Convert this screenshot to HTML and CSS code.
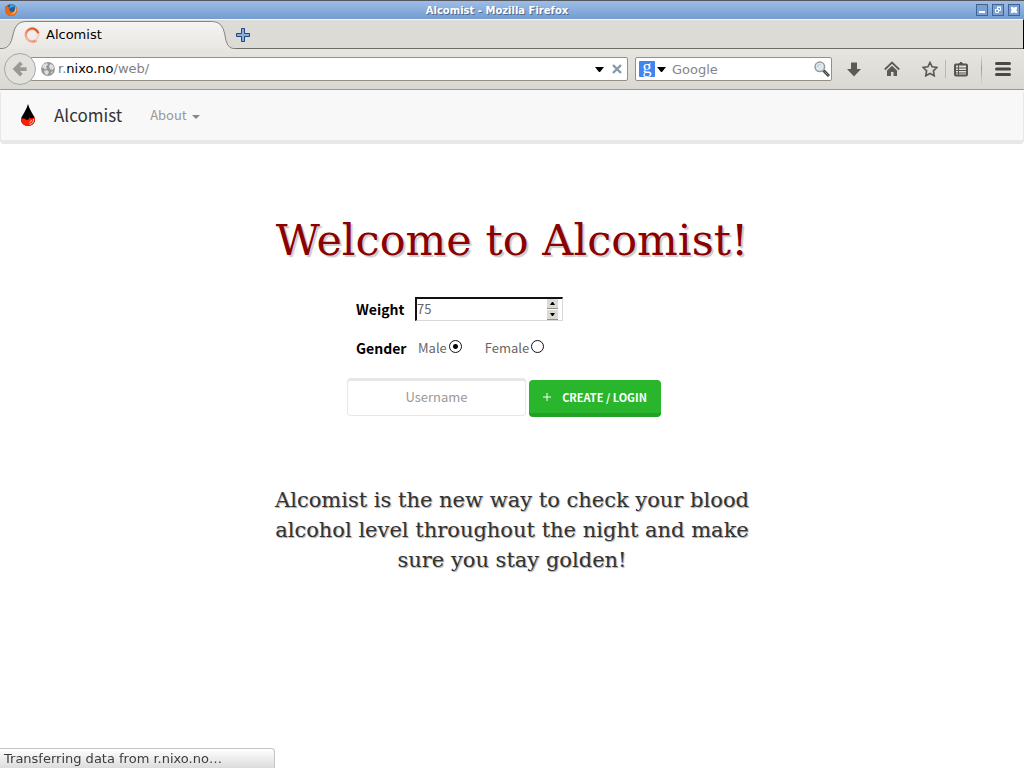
FILE: index.html
```html
<!DOCTYPE html>
<html lang="en">
<head>
<meta charset="utf-8">
<meta name="viewport" content="width=device-width, initial-scale=1">
<title>Alcomist</title>
<link rel="stylesheet" href="styles.css">
</head>
<body>
<header class="titlebar">
  <svg class="firefox" viewBox="0 0 14 14" aria-hidden="true">
    <circle cx="7" cy="7" r="6" fill="#c94a1c"/>
    <circle cx="7.500" cy="5.500" r="4.300" fill="#1f5f9f"/>
    <path d="M6 1.500q3-1 5 2l-2 .5-3 1z" fill="#35a3d8"/>
    <path d="M1 3q2 0 3 1l2 .5-1 2q1 3 4 2.500Q12.500 8 11.500 2.500 14 6 12.500 9.500 10 13.500 6 13 1 12 1 7z" fill="#e5681b"/>
    <path d="M11.500 3q2 4-.5 7-2 2-5 1.500 5-.5 5.500-8.500z" fill="#f6c04a"/>
  </svg>
  <span class="window-title">Alcomist - Mozilla Firefox</span>
  <div class="window-buttons">
    <button class="window-button" aria-label="Minimize"><svg viewBox="0 0 12 12"><path d="M3 7h6v2H3z" fill="#fff"/></svg></button>
    <button class="window-button" aria-label="Restore"><svg viewBox="0 0 12 12"><path d="M5.500 5V3.500h3v3H7M3.500 5.500h3v3h-3z" fill="none" stroke="#fff"/><path d="M5 3h4M3 5.500h4" stroke="#fff"/></svg></button>
    <button class="window-button" aria-label="Close"><svg viewBox="0 0 12 12"><path d="M3 3h2l1 1 1-1h2v2L8 6l1 1v2H7L6 8 5 9H3V7l1-1-1-1z" fill="#fff"/></svg></button>
  </div>
</header>

<div class="tabstrip">
  <div class="tab">
    <svg class="tab-shape" viewBox="0 0 242 29" preserveAspectRatio="none" aria-hidden="true">
      <defs><linearGradient id="tabfill" x2="0" y2="1"><stop offset="0" stop-color="#f5f4f3"/><stop offset="1" stop-color="#e8e7e3"/></linearGradient></defs>
      <path d="M0 29V28H3Q11 28 14 14 17 1.500 26 1.500H218Q228 1.500 230 14 232 28 239 28H242V29z" fill="url(#tabfill)"/>
      <path d="M0 28.500H3Q11 28 13.500 14 16 1.500 26 1.500H218Q228 1.500 230.500 14 232 28 239 28.500H242" fill="none" stroke="#85857c"/>
    </svg>
    <svg class="throbber" viewBox="0 0 18 18" aria-hidden="true">
      <defs><linearGradient id="spin" x1="1" x2="0" y2="1"><stop offset="0" stop-color="#ef4a16"/><stop offset=".5" stop-color="#ee7550"/><stop offset="1" stop-color="#f6cdbd"/></linearGradient></defs>
      <path d="M15.500 7.500A6.500 6.500 0 1 0 13.500 14" fill="none" stroke="url(#spin)" stroke-width="2.500"/>
      <path d="M15.500 7.500Q15.500 12 12 14.500" fill="none" stroke="#f3cdbf" stroke-width="2"/>
    </svg>
    <span class="tab-label">Alcomist</span>
  </div>
  <button class="new-tab" aria-label="New tab"><svg viewBox="0 0 14 14"><path d="M5.500.5h3v5h5v3h-5v5h-3v-5h-5v-3h5z" fill="#86aee0" stroke="#20437d"/></svg></button>
</div>

<div class="toolbar">
  <button class="back" aria-label="Back"><svg viewBox="0 0 32 32"><path d="M23 16H11.500M17.500 9.500L11 16l6.500 6.500" fill="none" stroke="#9a9995" stroke-width="4"/></svg></button>
  <div class="urlbar">
    <svg class="globe" viewBox="0 0 14 14" aria-hidden="true"><circle cx="7" cy="7" r="6.900" fill="#969696"/><path d="M2 2.500L6 1l1 1.500-2 2 1 2-2 1L2 5.500 1 6zM3 9l3-1 2 2-1.500 3L4 12zM9 2l3 1 1 3-1.500 2L9 7 8 4.500zM10 10l2-1-1.500 3z" fill="#dedede"/></svg>
    <div class="url-field">
      <input class="url-input" type="text" aria-label="Address">
      <span class="url-text">r.<span class="url-domain">nixo.no</span>/web/</span>
    </div>
    <button class="url-drop" aria-label="Show history"><svg viewBox="0 0 9 5"><path d="M0 0h9L5 5H4z"/></svg></button>
    <button class="url-stop" aria-label="Stop"><svg viewBox="0 0 10 10"><path d="M1 1l8 8M9 1L1 9" stroke="#8998ab" stroke-width="2.400"/></svg></button>
  </div>
  <div class="searchbar">
    <span class="engine">g</span>
    <button class="url-drop" aria-label="Choose search engine"><svg viewBox="0 0 9 5"><path d="M0 0h9L5 5H4z"/></svg></button>
    <input class="search-input" type="text" placeholder="Google" aria-label="Search">
    <button class="search-go" aria-label="Search"><svg viewBox="0 0 16 16"><path d="M9.500 9.500l5.500 5.500" stroke="#3f3f3f" stroke-width="3"/><path d="M10.500 10.500l4 4" stroke="#999" stroke-width="1"/><circle cx="5.800" cy="5.800" r="4.800" fill="#dce9f3" stroke="#9a9a96" stroke-width="1.500"/><path d="M3.500 6q0-2.500 3-2.500" fill="none" stroke="#a8c4e2"/></svg></button>
  </div>
  <button class="tool downloads" aria-label="Downloads"><svg viewBox="0 0 16 16"><path d="M5 1.500h6V8h4l-7 7.500L1 8h4z" fill="#5b5b58"/></svg></button>
  <button class="tool home" aria-label="Home"><svg viewBox="0 0 16 16"><path d="M.8 8.500L8 1.500l7.200 7" fill="none" stroke="#5b5b58" stroke-width="1.800"/><path d="M8 4.800L3 9.500V15h4v-4h2.500v4H13V9.500z" fill="#5b5b58"/></svg></button>
  <button class="tool star" aria-label="Bookmark this page"><svg viewBox="0 0 16 16"><path d="M8 1.500l2.100 4.300 4.800.7-3.500 3.400.8 4.800L8 12.400l-4.200 2.300.8-4.800L1.100 6.500l4.800-.7z" fill="none" stroke="#5b5b58" stroke-width="1.700"/></svg></button>
  <span class="short-divider"></span>
  <button class="tool bookmarks" aria-label="Bookmarks"><svg viewBox="0 0 16 16"><rect x="2" y="3.500" width="12" height="11" rx="1" fill="none" stroke="#555552" stroke-width="2"/><path d="M5.500 3.500L8 1l2.500 2.500zM3 7h10M3 9.500h10M3 12h10" stroke="#555552" fill="#555552"/><path d="M5.500 4v10" stroke="#555552"/></svg></button>
  <span class="long-divider"></span>
  <button class="tool menu" aria-label="Open menu"><svg viewBox="0 0 16 16"><path d="M1.500 2.500h13M1.500 8h13M1.500 13.500h13" stroke="#484846" stroke-width="3" stroke-linecap="round"/></svg></button>
</div>

<nav class="navbar">
  <a class="brand" href="#">
    <svg class="drop" viewBox="0 0 14 22" aria-hidden="true"><path d="M7 0Q8 4 11 9q3 4 3 7a7 6 0 0 1-14 0q0-3 3-7 3-5 4-9z" fill="#000"/><path d="M0 14.500h3.500l2 1.500 2-.5 1-2 1.500 1 4-1V15.500a7 6.500 0 0 1-14 0z" fill="#ff1e00"/><path d="M12.500 15q.5 4-4 5.500M10.500 16q0 1.500-2 2.500" fill="none" stroke="#fff" stroke-width=".8"/></svg>
    <span>Alcomist</span>
  </a>
  <a class="nav-link" href="#">About<span class="caret"></span></a>
</nav>

<main class="page">
  <h1 class="welcome">Welcome to Alcomist!</h1>
  <form class="signup">
    <div class="field-row">
      <label class="field-name" for="weight">Weight</label>
      <div class="weight-box">
        <input class="weight" id="weight" type="number" placeholder="75">
        <div class="spinner">
          <button type="button" class="step" aria-label="Increase"><svg viewBox="0 0 5 3"><path d="M0 3L2 0h1l2 3z"/></svg></button>
          <button type="button" class="step" aria-label="Decrease"><svg viewBox="0 0 5 3"><path d="M0 0l2 3h1l2-3z"/></svg></button>
        </div>
      </div>
    </div>
    <div class="field-row" role="radiogroup" aria-label="Gender">
      <span class="field-name">Gender</span>
      <label class="choice">Male<input class="radio" type="radio" name="gender" checked></label>
      <label class="choice">Female<input class="radio" type="radio" name="gender"></label>
    </div>
    <div class="login-row">
      <input class="username" type="text" placeholder="Username" aria-label="Username">
      <button type="button" class="create"><svg class="plus" viewBox="0 0 8 8" aria-hidden="true"><path d="M4 0v8M0 4h8" stroke="#fff"/></svg>CREATE / LOGIN</button>
    </div>
  </form>
  <p class="lead">Alcomist is the new way to check your blood alcohol level throughout the night and make sure you stay golden!</p>
</main>

<div class="status" role="status">Transferring data from r.nixo.no…</div>
</body>
</html>
```

FILE: styles.css
```css
* { box-sizing: border-box; }

body {
  margin: 0;
  min-height: 100vh;
  background: #fff;
  color: #222;
  font-family: "DejaVu Sans", sans-serif;
  font-size: 13px;
}

button, input { font: inherit; margin: 0; }
button { padding: 0; border: 0; background: none; }
svg { display: block; }

/* Window title bar */
.titlebar {
  display: grid;
  grid-template-columns: 14px 1fr 44px;
  align-items: center;
  height: 19px;
  padding: 0 4px;
  border-top: 1px solid #55585d;
  background: linear-gradient(#9dbde8, #749ccf);
}
.firefox { width: 14px; height: 14px; }
.window-title {
  text-align: center;
  color: #fff;
  font-size: 10px;
  font-weight: bold;
  text-shadow: 1px 1px 0 #50698c;
}
.window-buttons { display: flex; justify-content: flex-end; gap: 4px; }
.window-button {
  width: 12px;
  height: 12px;
  background: #7ba0d4;
  outline: 1px solid #41638f;
  outline-offset: -1px;
}

/* Tabs */
.tabstrip {
  display: flex;
  height: 30px;
  border-top: 1px solid #f6f6f2;
  border-right: 1px solid #000;
  background: linear-gradient(#dcdbd5, #dcdbd5 28px, #6c6d65 28px);
}
.tab {
  position: relative;
  display: flex;
  align-items: center;
  width: 236px;
  padding-left: 23px;
  gap: 5px;
}
.tab-shape { position: absolute; inset: 0; width: 100%; height: 29px; }
.throbber { position: relative; width: 18px; height: 18px; }
.tab-label { position: relative; color: #000; }
.new-tab svg { width: 14px; height: 14px; }

/* Navigation toolbar */
.toolbar {
  display: flex;
  align-items: center;
  height: 41px;
  padding: 0 12px 0 4px;
  border-bottom: 1px solid #9d998f;
  background: linear-gradient(#e6e5e0, #d9d8d2);
}
.back {
  z-index: 1;
  flex: none;
  width: 32px;
  height: 32px;
  border: 1px solid #a3a8ad;
  border-radius: 50%;
  background: #e2e1dc;
}
.urlbar, .searchbar {
  display: flex;
  align-items: center;
  height: 24px;
  border: 1px solid #968f84;
  border-radius: 2px;
  background: #fff;
}
.urlbar { flex: 1; margin-left: -6px; padding: 0 5px 0 10px; }
.globe { width: 14px; height: 14px; }
.url-field { position: relative; flex: 1; margin-left: 3px; }
.url-input { width: 100%; height: 20px; padding: 0; border: 0; outline: 0; background: none; }
.url-text { position: absolute; left: 0; top: 2px; color: #7f7f7f; pointer-events: none; }
.url-domain { color: #000; }
.url-drop svg { width: 9px; height: 5px; }
.url-stop { margin-left: 8px; }
.url-stop svg { width: 10px; height: 10px; }
.searchbar { width: 197px; margin-left: 7px; padding: 0 1px 0 3px; }
.engine {
  width: 16px;
  height: 16px;
  border-radius: 1px;
  background: #4484f0;
  color: #fff;
  font: 18px/12px "Liberation Serif", serif;
  text-align: center;
}
.engine + .url-drop { margin-left: 2px; }
.search-input {
  flex: 1;
  min-width: 0;
  height: 20px;
  margin-left: 6px;
  padding: 0;
  border: 0;
  background: none;
}
.search-input::placeholder { color: #858585; opacity: 1; }
.search-go svg, .tool svg { width: 16px; height: 16px; }
.downloads { margin-left: 14px; }
.home { margin-left: 22px; }
.star { margin-left: 22px; }
.short-divider { width: 1px; height: 18px; margin: 0 7px; background: #b9b7b2; }
.long-divider { width: 1px; height: 32px; margin: 0 12px; background: linear-gradient(transparent, #9c9a94, transparent); }
.menu svg { width: 18px; }

/* Site navigation bar */
.navbar {
  display: flex;
  align-items: center;
  gap: 28px;
  height: 54px;
  padding: 0 20px;
  border: 1px solid #e7e7e7;
  border-width: 0 1px 4px;
  border-radius: 4px;
  background: #f8f8f8;
  font-family: "Noto Sans CJK SC", sans-serif;
}
.brand, .nav-link { display: flex; align-items: center; text-decoration: none; line-height: 24px; }
.brand { gap: 19px; color: #333; font-size: 17px; }
.drop { width: 14px; height: 22px; }
.nav-link { gap: 5px; color: #999; font-size: 13px; }
.caret { margin-top: 3px; border: 4px solid transparent; border-top-color: #888; border-bottom: 0; }

/* Page content */
.page {
  display: flex;
  flex-direction: column;
  align-items: center;
  padding: 69px 16px 40px;
}
.welcome {
  margin: 0;
  color: #8b0000;
  font: 43px/54px "DejaVu Serif", serif;
  text-align: center;
  text-shadow: 2px 2px 1px #ccc;
}
.signup {
  display: flex;
  flex-direction: column;
  margin-top: 30px;
  padding-right: 16px;
  font-family: "Noto Sans CJK SC", sans-serif;
  color: #666;
}
.field-row { display: flex; align-items: center; height: 24px; padding-left: 9px; }
.field-row + .field-row { margin-top: 15px; }
.field-name { width: 59px; color: #000; font-size: 14px; font-weight: bold; line-height: 20px; }
.weight-box {
  display: flex;
  width: 148px;
  height: 24px;
  border: 2px inset #dad8d2;
  border-color: #111 #dad8d2 #dad8d2 #111;
  border-style: solid;
  border-width: 2px 1px 1px 2px;
}
.weight {
  flex: 1;
  min-width: 0;
  padding: 0 0 2px;
  border: 0;
  outline: 0;
  appearance: textfield;
  -moz-appearance: textfield;
}
.weight::placeholder { color: #666; opacity: 1; }
.spinner { display: flex; flex-direction: column; gap: 1px; width: 11px; margin-right: 4px; }
.step {
  display: grid;
  flex: 1;
  place-items: center;
  border-bottom: 1px solid #938f86;
  background: #dcdad5;
}
.step svg { width: 5px; height: 3px; }
.choice { display: flex; align-items: center; gap: 2px; margin-left: 3px; line-height: 20px; }
.choice + .choice { margin-left: 23px; }
.radio {
  appearance: none;
  width: 13px;
  height: 13px;
  margin-bottom: 3px;
  border: 1px solid #111;
  border-radius: 50%;
}
.radio:checked { background: radial-gradient(#000 2px, transparent 3px); }
.login-row { display: flex; align-items: flex-start; gap: 3px; margin-top: 18px; }
.username {
  width: 179px;
  height: 38px;
  padding: 0 12px 3px;
  border: 1px solid #e7e7e7;
  border-top-width: 3px;
  border-radius: 4px;
  text-align: center;
}
.username::placeholder { color: #999; opacity: 1; }
.create {
  display: flex;
  align-items: center;
  justify-content: center;
  gap: 11px;
  width: 132px;
  height: 37px;
  margin-top: 2px;
  border-bottom: 4px solid #23a127;
  border-radius: 4px;
  background: #29b62d;
  color: #fff;
  font-size: 11px;
  font-weight: bold;
}
.plus { width: 8px; height: 8px; margin-top: 1px; }
.lead {
  max-width: 480px;
  margin: 68px 0 0;
  color: #333;
  font: 21px/30px "DejaVu Serif", serif;
  text-align: center;
  text-shadow: 1px 1px 1px #aaa;
}

/* Browser status panel */
.status {
  position: fixed;
  left: 0;
  bottom: 0;
  width: 275px;
  height: 20px;
  padding-left: 4px;
  border: 1px solid #c4c4c4;
  border-width: 1px 1px 0 0;
  border-radius: 0 4px 0 0;
  background: linear-gradient(#fff, #dcdcdc);
  color: #3d3d3d;
  line-height: 19px;
}
```
